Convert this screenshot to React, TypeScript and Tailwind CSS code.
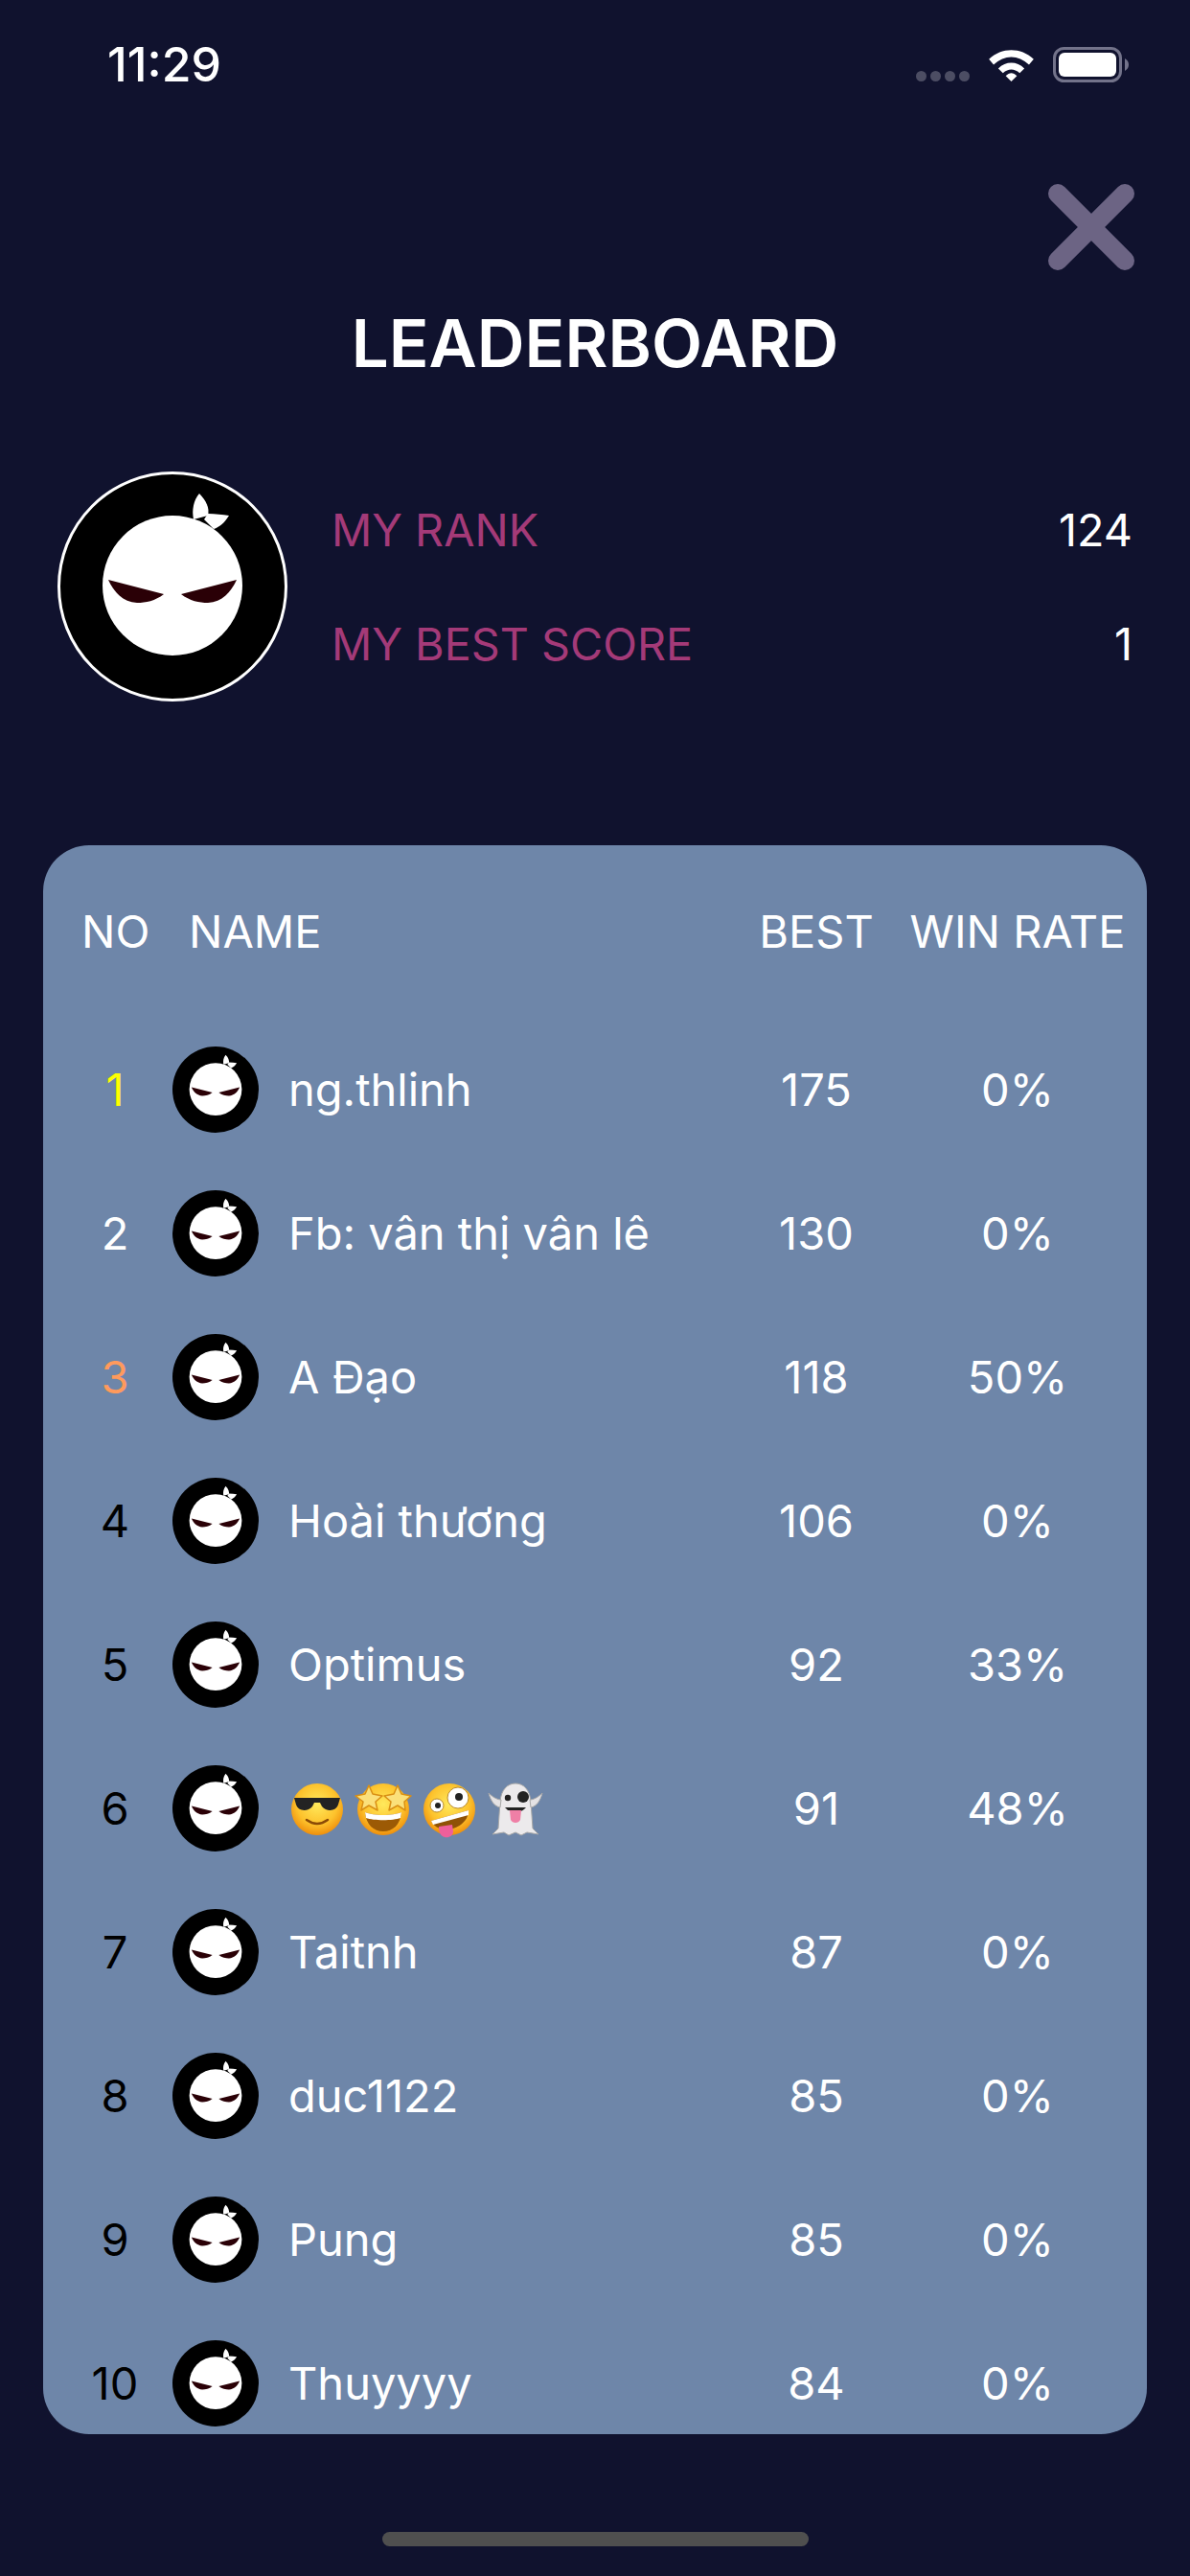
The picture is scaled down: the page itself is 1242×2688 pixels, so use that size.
import { useId } from "react";

const rows = [
  { no: 1, name: "ng.thlinh", best: 175, rate: "0%", color: "text-[#ffff00]" },
  { no: 2, name: "Fb: vân thị vân lê", best: 130, rate: "0%", color: "text-white" },
  { no: 3, name: "A Đạo", best: 118, rate: "50%", color: "text-[#ff9a5c]" },
  { no: 4, name: "Hoài thương", best: 106, rate: "0%", color: "text-black" },
  { no: 5, name: "Optimus", best: 92, rate: "33%", color: "text-black" },
  { no: 6, name: "", best: 91, rate: "48%", color: "text-black" },
  { no: 7, name: "Taitnh", best: 87, rate: "0%", color: "text-black" },
  { no: 8, name: "duc1122", best: 85, rate: "0%", color: "text-black" },
  { no: 9, name: "Pung", best: 85, rate: "0%", color: "text-black" },
  { no: 10, name: "Thuyyyy", best: 84, rate: "0%", color: "text-black" },
];

function NinjaLogo({ ring, className }: { ring?: boolean; className: string }) {
  return (
    <svg viewBox="0 0 240 240" className={className}>
      <circle cx="120" cy="120" r={ring ? 118.5 : 120} fill="#000" stroke={ring ? "#fff" : "none"} strokeWidth="3" />
      <circle cx="120" cy="119" r="73" fill="#fff" />
      <path d="M148 23 C155 30 159 38 157 46 L142 50 C140 40 142 30 148 23Z" fill="#fff" />
      <path d="M179 46 C174 54 169 58 163 60 L153 50 L157 44 C165 44 172 45 179 46Z" fill="#fff" />
      <path d="M53 113 L111 128 C102 135 92 137 83 137 C68 136 59 126 53 113Z" fill="#2a0006" />
      <path d="M187 113 L129 128 C138 135 148 137 157 137 C172 136 181 126 187 113Z" fill="#2a0006" />
    </svg>
  );
}

function Face({ id }: { id: string }) {
  return (
    <>
      <defs>
        <radialGradient id={id} cx="50%" cy="40%" r="60%">
          <stop offset="0%" stopColor="#ffe95c" />
          <stop offset="65%" stopColor="#fdc22c" />
          <stop offset="100%" stopColor="#ef8f0c" />
        </radialGradient>
      </defs>
      <circle cx="30" cy="30" r="27" fill={`url(#${id})`} />
    </>
  );
}

function EmojiRow() {
  const base = useId();
  return (
    <div className="flex items-center gap-[9px] mt-[2px]">
      <svg viewBox="0 0 60 60" className="w-[60px] h-[60px]">
        <Face id={base + "a"} />
        <path d="M6 18 L54 18 L52 25 C50 32 40 33 35 27 L33 23 L27 23 L25 27 C20 33 10 32 8 25Z" fill="#232323" />
        <path d="M19 41 C26 46 34 46 41 41" fill="none" stroke="#8a4a06" strokeWidth="2.5" strokeLinecap="round" />
      </svg>
      <svg viewBox="0 0 60 60" className="w-[60px] h-[60px]">
        <Face id={base + "b"} />
        <path d="M11 33 C20 37 40 37 49 33 C48 46 40 53 30 53 C20 53 12 46 11 33Z" fill="#9c5a05" />
        <path d="M11 33 C20 37 40 37 49 33 L48 39 C40 42 20 42 12 39Z" fill="#fff" />
        <path d="M15 5 L19 14 L29 16 L22 22 L24 31 L15 26 L7 31 L9 22 L1 16 L11 14Z" fill="#fbe07a" stroke="#d98f14" strokeWidth="1.5" strokeLinejoin="round" />
        <path d="M45 5 L49 14 L59 16 L52 22 L53 31 L45 26 L36 31 L38 22 L31 16 L41 14Z" fill="#fbe07a" stroke="#d98f14" strokeWidth="1.5" strokeLinejoin="round" />
      </svg>
      <svg viewBox="0 0 60 60" className="w-[60px] h-[60px]">
        <Face id={base + "c"} />
        <circle cx="17" cy="26" r="7" fill="#fff" stroke="#b9892a" />
        <circle cx="18" cy="26" r="3" fill="#222" />
        <circle cx="39" cy="18" r="11" fill="#fff" stroke="#b9892a" />
        <circle cx="40" cy="17" r="4" fill="#222" />
        <path d="M11 42 L50 31 C50 43 38 51 27 51 C19 51 13 47 11 42Z" fill="#8f5206" />
        <path d="M11 42 L50 31 L50 36 L13 46Z" fill="#fff" />
        <path d="M19 48 L33 46 L34 53 C34 58 29 60 25 59 C21 58 19 54 19 48Z" fill="#ef5f9b" />
      </svg>
      <svg viewBox="0 0 60 60" className="w-[60px] h-[60px]">
        <path d="M14 22 C15 9 22 3 30 3 C38 3 45 9 46 22 L48 50 L54 56 L42 54 L36 57 L30 54 L23 57 L18 54 L6 56 L12 50Z" fill="#eceaec" stroke="#a8a8a8" strokeWidth="1" />
        <path d="M14 28 C8 27 4 21 2 13 C6 17 11 20 15 20Z M46 28 C52 27 56 21 58 13 C54 17 49 20 45 20Z" fill="#e4e2e4" stroke="#a8a8a8" strokeWidth="1" />
        <circle cx="22" cy="18" r="3.2" fill="#222" />
        <circle cx="38" cy="17" r="6" fill="#222" />
        <path d="M19 28 L41 28 C38 31 36 32 35 32 L22 31Z" fill="#222" />
        <path d="M24 31 L36 31 L35 41 C33 45 27 45 25 41Z" fill="#ef7fa6" />
      </svg>
    </div>
  );
}

export default function App() {
  return (
    <div className="w-[1242px] h-[2688px] bg-[#10122e] flex flex-col font-['Inter',sans-serif] overflow-hidden">
      {/* Status bar */}
      <div className="h-[134px] flex items-center justify-between pl-[112px] pr-[64px]">
        <span className="text-[50px] leading-none font-medium text-white">11:29</span>
        <div className="flex items-center gap-[20px]">
          <div className="flex items-center gap-[4px] mt-[24px]">
            <span className="w-[11px] h-[11px] rounded-full bg-[#4c4d63]" />
            <span className="w-[11px] h-[11px] rounded-full bg-[#4c4d63]" />
            <span className="w-[11px] h-[11px] rounded-full bg-[#4c4d63]" />
            <span className="w-[11px] h-[11px] rounded-full bg-[#4c4d63]" />
          </div>
          <svg viewBox="0 0 48 36" className="w-[47px] h-[35px]">
            <path d="M0 12 C14 -1 34 -1 48 12 L43 18 C31 7 17 7 5 18Z" fill="#fff" />
            <path d="M10 22 C18 14 30 14 38 22 L33 27 C27 22 21 22 15 27Z" fill="#fff" />
            <path d="M18 30 C22 26 26 26 30 30 L24 36Z" fill="#fff" />
          </svg>
          <svg viewBox="0 0 79 37" className="w-[79px] h-[37px]">
            <rect x="1.5" y="1.5" width="69" height="34" rx="10" fill="none" stroke="#73738a" strokeWidth="3" />
            <rect x="6" y="6" width="60" height="25" rx="6" fill="#fff" />
            <path d="M75 12 C78 14 79 16 79 18.5 C79 21 78 23 75 25Z" fill="#73738a" />
          </svg>
        </div>
      </div>

      {/* Close */}
      <div className="flex justify-end pr-[58px] mt-[58px]">
        <svg viewBox="0 0 90 90" className="w-[90px] h-[90px]">
          <path d="M10 10 L80 80 M80 10 L10 80" stroke="#6c6484" strokeWidth="20" strokeLinecap="round" />
        </svg>
      </div>

      <h1 className="mt-[36px] text-center text-[69px] leading-[80px] font-semibold text-white">LEADERBOARD</h1>

      {/* My stats */}
      <div className="mt-[94px] pl-[60px] pr-[60px] flex items-center gap-[46px]">
        <NinjaLogo ring className="w-[240px] h-[240px] shrink-0" />
        <div className="flex-1 flex flex-col gap-[59px] text-[46.75px] leading-[60px]">
          <div className="flex justify-between">
            <span className="text-[#a43a78]">MY RANK</span>
            <span className="text-white">124</span>
          </div>
          <div className="flex justify-between">
            <span className="text-[#a43a78]">MY BEST SCORE</span>
            <span className="text-white">1</span>
          </div>
        </div>
      </div>

      {/* Table */}
      <div className="mt-[150px] mx-[45px] h-[1658px] rounded-[48px] bg-[#6e86a9] overflow-hidden text-white text-[47px]">
        <div className="grid grid-cols-[152px_549px_212px_208px] items-center h-[178px] leading-[56px] pt-[2px]">
          <span className="pl-[40px]">NO</span>
          <span>NAME</span>
          <span className="text-center">BEST</span>
          <span className="justify-self-center whitespace-nowrap">WIN RATE</span>
        </div>
        <div className="pt-[2px]">
          {rows.map((r) => (
            <div key={r.no} className="grid grid-cols-[150px_551px_212px_208px] items-center h-[150px]">
              <span className={`text-center ${r.color}`}>{r.no}</span>
              <div className="flex items-center gap-[31px] -ml-[15px]">
                <NinjaLogo className="w-[90px] h-[90px] shrink-0" />
                {r.name ? <span>{r.name}</span> : <EmojiRow />}
              </div>
              <span className="text-center">{r.best}</span>
              <span className="text-center">{r.rate}</span>
            </div>
          ))}
        </div>
      </div>

      {/* Home indicator */}
      <div className="mt-[102px] mx-auto w-[445px] h-[15px] rounded-full bg-[#4f4f4f]" />
    </div>
  );
}
